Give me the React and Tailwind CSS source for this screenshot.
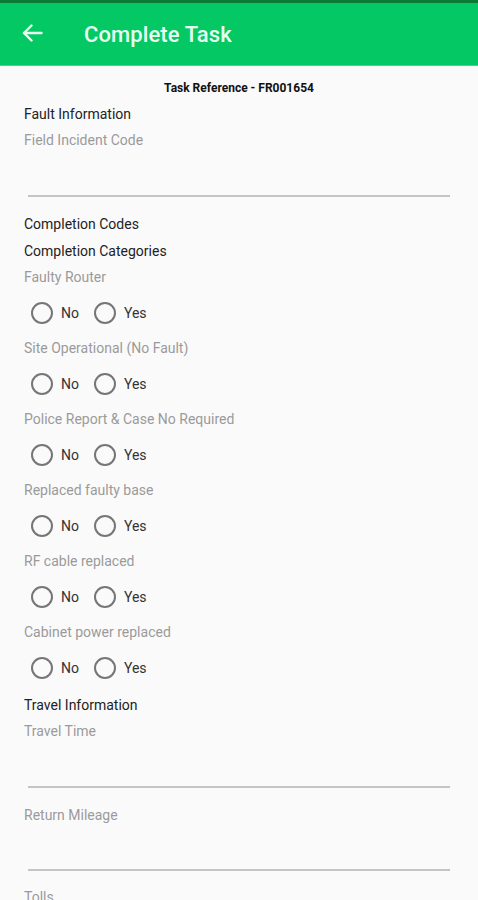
import React from 'react';

const questions = [
    'Faulty Router',
    'Site Operational (No Fault)',
    'Police Report & Case No Required',
    'Replaced faulty base',
    'RF cable replaced',
    'Cabinet power replaced',
];

function Radio({ label }) {
    return (
        <div className="flex items-center">
            <span className="w-[22px] h-[22px] rounded-full border-2 border-[#767676]" />
            <span className="ml-[8px] text-[14px] text-[#333]">{label}</span>
        </div>
    );
}

function Heading({ children, className = '' }) {
    return <div className={`h-[26px] flex items-center text-[14px] text-[#222] ${className}`}>{children}</div>;
}

function Label({ children, className = '' }) {
    return <div className={`h-[26px] flex items-center text-[14px] text-[#9a9a9a] ${className}`}>{children}</div>;
}

function Underline({ gap }) {
    return <div className={`${gap} ml-[4px] mr-[4px] h-[2px] bg-[#c4c4c4]`} />;
}

export default function App() {
    return (
        <div className="w-[478px] h-[900px] overflow-hidden bg-[#fafafa]" style={{ fontFamily: 'Roboto, "Noto Sans", sans-serif' }}>
            <div className="h-[3px] bg-[#0b7a34]" />
            <div className="h-[63px] bg-[#03c863] flex items-center border-b border-[#3fd88a]">
                <svg className="ml-[22px] mt-[-2px]" width="21" height="18" viewBox="0 0 21 18" fill="none" stroke="#e6fff0" strokeWidth="2.4" strokeLinecap="round" strokeLinejoin="round">
                    <path d="M19.5 9H2" />
                    <path d="M9.5 1.5L2 9l7.5 7.5" />
                </svg>
                <span className="ml-[41px] text-[22px] font-medium text-[#e6fff0] tracking-[0.1px]">Complete Task</span>
            </div>

            <div className="px-[24px]">
                <div className="mt-[10px] h-[24px] flex items-center justify-center text-[12px] font-bold text-[#111]">
                    Task Reference - FR001654
                </div>
                <Heading className="mt-[1px]">Fault Information</Heading>
                <Label>Field Incident Code</Label>
                <Underline gap="mt-[42px]" />

                <Heading className="mt-[14px]">Completion Codes</Heading>
                <Heading className="mt-[1px]">Completion Categories</Heading>

                {questions.map((q, i) => (
                    <div key={q} className={i === 0 ? '' : 'mt-[9px]'}>
                        <Label>{q}</Label>
                        <div className="mt-[10px] h-[26px] ml-[7px] flex items-center gap-[15px]">
                            <Radio label="No" />
                            <Radio label="Yes" />
                        </div>
                    </div>
                ))}

                <Heading className="mt-[11px]">Travel Information</Heading>
                <Label>Travel Time</Label>
                <Underline gap="mt-[42px]" />
                <Label className="mt-[14px]">Return Mileage</Label>
                <Underline gap="mt-[41px]" />
                <Label className="mt-[13px]">Tolls</Label>
            </div>
        </div>
    );
}
